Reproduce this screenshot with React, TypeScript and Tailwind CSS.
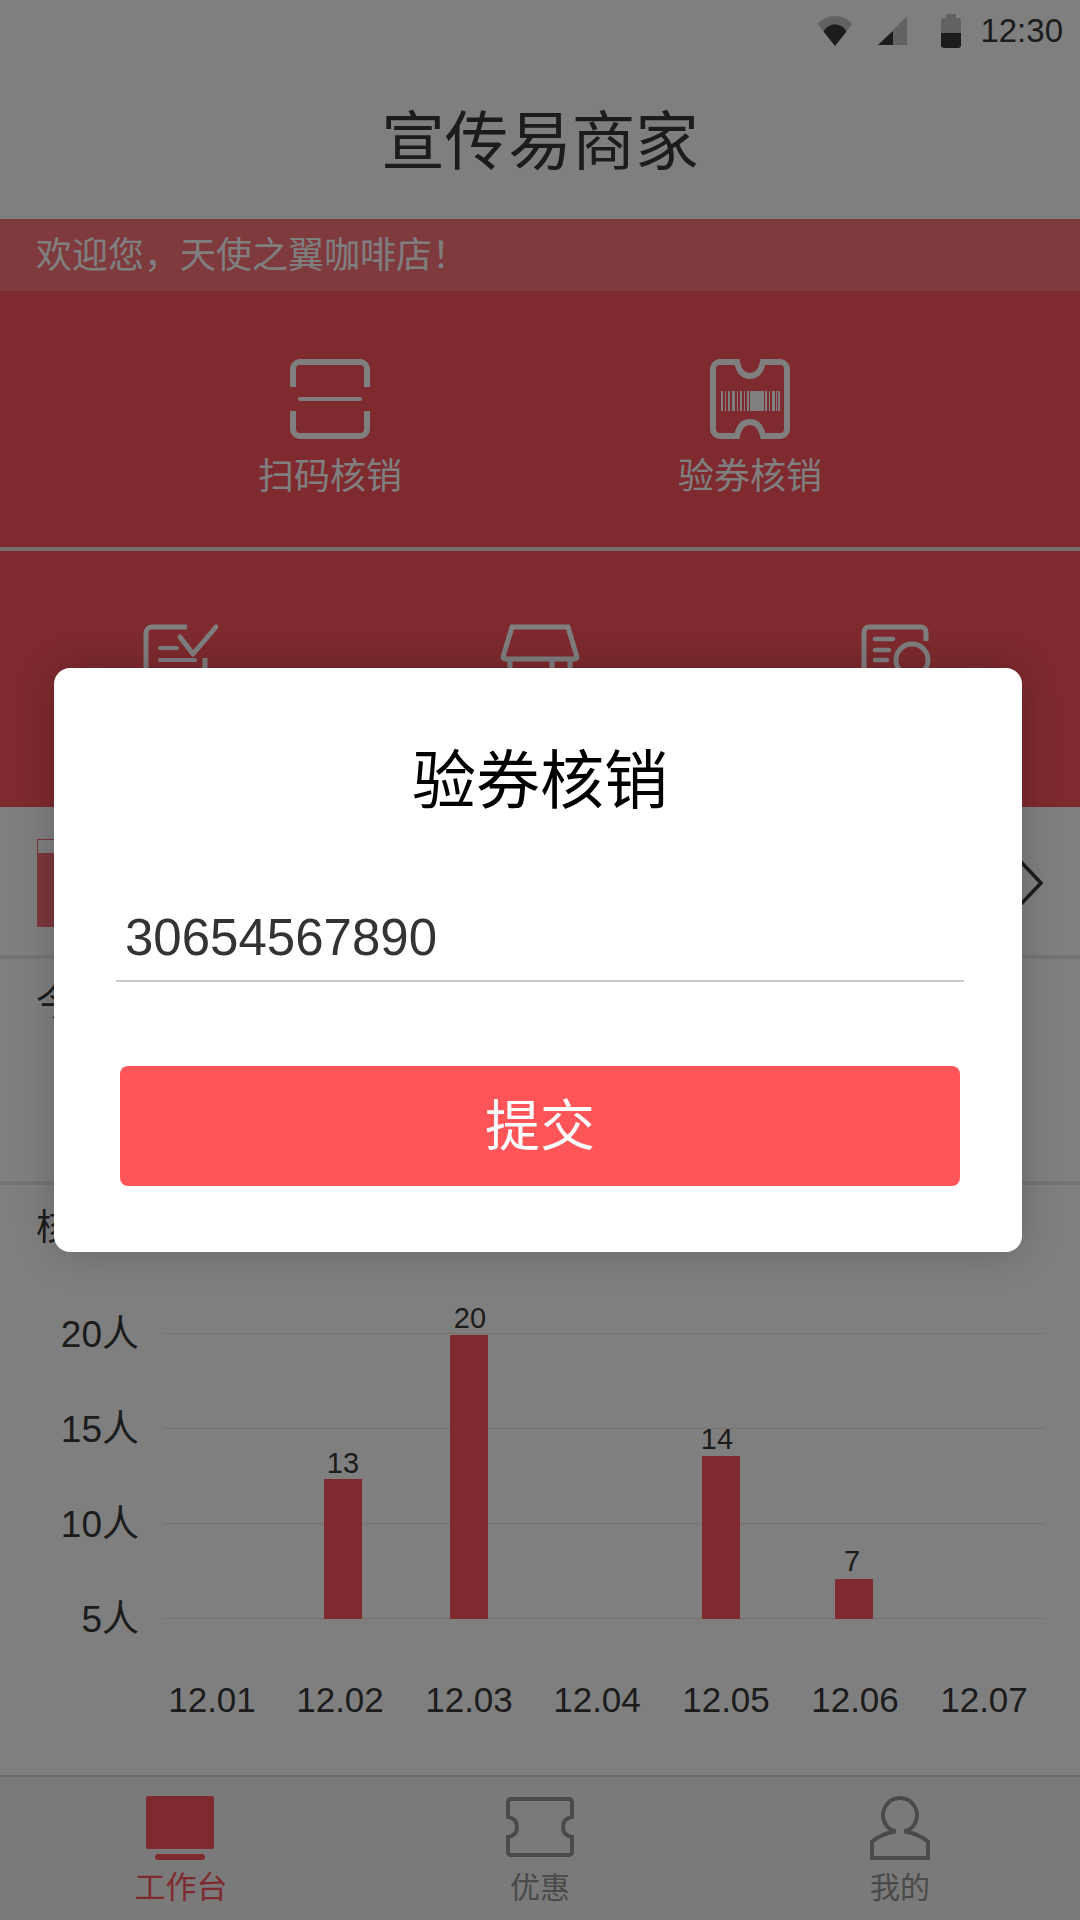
const CJK = "font-['Liberation_Sans','Noto_Sans_CJK_SC',sans-serif]";

function ScanIcon() {
  return (
    <svg width="80" height="80" viewBox="0 0 80 80" fill="none" stroke="white" strokeWidth="6">
      <path d="M3 28V10a7 7 0 0 1 7-7h60a7 7 0 0 1 7 7v18" />
      <path d="M3 52v18a7 7 0 0 0 7 7h60a7 7 0 0 0 7-7V52" />
      <path d="M10 40h60" strokeWidth="4" strokeLinecap="round" />
    </svg>
  );
}

function CouponIcon() {
  const bars = [
    [0, 2], [4, 1], [7, 2], [11, 3], [16, 1], [19, 2], [23, 1], [26, 2],
    [29, 14], [44, 2], [48, 1], [51, 3], [55, 1], [57, 2],
  ];
  return (
    <svg width="80" height="80" viewBox="0 0 80 80" fill="none" stroke="white" strokeWidth="6">
      <path d="M27 3H10a7 7 0 0 0-7 7v60a7 7 0 0 0 7 7h17c2-10 7-14 13-14s11 4 13 14h17a7 7 0 0 0 7-7V10a7 7 0 0 0-7-7H53c-2 10-7 14-13 14S29 13 27 3Z" />
      <g fill="white" stroke="none">
        {bars.map(([x, w], i) => (
          <rect key={i} x={11 + x} y="32" width={w} height="20" />
        ))}
      </g>
    </svg>
  );
}

function ChecklistIcon() {
  return (
    <svg width="75" height="80" viewBox="0 0 75 80" fill="none" stroke="white" strokeWidth="5">
      <path d="M44 3H9a6 6 0 0 0-6 6v64a4 4 0 0 0 4 4h52a4 4 0 0 0 3-4V34" />
      <path d="M37 13l13 17 23-27" strokeWidth="5" strokeLinecap="round" strokeLinejoin="round" />
      <path d="M17 24h17M17 36h35" strokeLinecap="round" strokeWidth="4" />
    </svg>
  );
}

function StoreIcon() {
  return (
    <svg width="80" height="80" viewBox="0 0 80 80" fill="none" stroke="white" strokeWidth="5">
      <path d="M12 3h56l9 30a2 2 0 0 1-2 2H5a2 2 0 0 1-2-2L12 3Z" />
      <path d="M10 35v41h60V35M52 37v39" />
    </svg>
  );
}

function SearchDocIcon() {
  return (
    <svg width="72" height="80" viewBox="0 0 72 80" fill="none" stroke="white" strokeWidth="5">
      <path d="M3 72V8a5 5 0 0 1 5-5h52a5 5 0 0 1 5 5v9" strokeWidth="5" />
      <path d="M14 15h18M14 26h14M14 36h12" strokeLinecap="round" strokeWidth="4.5" />
      <circle cx="51" cy="36" r="16" strokeWidth="5" />
    </svg>
  );
}

function StatusIcons() {
  return (
    <div className="flex items-center">
      <svg width="34" height="30" viewBox="0 0 34 30" className="mt-[1px]">
        <path d="M0 8C4 3 10 0 17 0s13 3 17 8L17 30Z" fill="#c4c4c4" />
        <path d="M5.500 15.500C8.500 10.500 12.500 8.500 17 8.500s8.500 2 11.500 7L17 30Z" fill="#383838" />
      </svg>
      <svg width="29" height="29" viewBox="0 0 29 29" className="ml-[26px]">
        <path d="M29 0V29H0Z" fill="#c4c4c4" />
        <path d="M15 15V29H0Z" fill="#383838" />
      </svg>
      <svg width="20" height="34" viewBox="0 0 20 34" className="ml-[34px] mt-[2px]">
        <path d="M6 0h8a1 1 0 0 1 1 1v3h3a2 2 0 0 1 2 2v13H0V6a2 2 0 0 1 2-2h3V1a1 1 0 0 1 1-1Z" fill="#c4c4c4" />
        <path d="M0 19h20v12a3 3 0 0 1-3 3H3a3 3 0 0 1-3-3Z" fill="#383838" />
      </svg>
    </div>
  );
}

function Chart() {
  const grid = [1333, 1428, 1523, 1618];
  const bars = [
    { x: 324, y: 1479, label: "13", lx: 343, ly: 1473 },
    { x: 450, y: 1335, label: "20", lx: 470, ly: 1328 },
    { x: 702, y: 1456, label: "14", lx: 717, ly: 1449 },
    { x: 835, y: 1579, label: "7", lx: 852, ly: 1571 },
  ];
  const yLabels = ["20", "15", "10", "5"];
  const xLabels = [
    ["12.01", 212],
    ["12.02", 340],
    ["12.03", 469],
    ["12.04", 597],
    ["12.05", 726],
    ["12.06", 855],
    ["12.07", 984],
  ] as const;
  const top = 1290;
  const font = "Liberation Sans, Noto Sans CJK SC, sans-serif";
  return (
    <svg width="1080" height="450" viewBox={`0 ${top} 1080 450`} className="block" fontFamily={font} fill="#383838">
      {grid.map((y) => (
        <line key={y} x1="164" x2="1044" y1={y + 0.5} y2={y + 0.5} stroke="#fbdfe1" strokeWidth="1" />
      ))}
      {bars.map((b) => (
        <g key={b.label}>
          <rect x={b.x} y={b.y} width="38" height={1619 - b.y} fill="#fc545c" />
          <text x={b.lx} y={b.ly} fontSize="29" textAnchor="middle">{b.label}</text>
        </g>
      ))}
      {yLabels.map((t, i) => (
        <text key={t} x="139" y={grid[i] + 14} fontSize="37" textAnchor="end">{t}人</text>
      ))}
      {xLabels.map(([t, x]) => (
        <text key={t} x={x} y="1712" fontSize="35" textAnchor="middle">{t}</text>
      ))}
    </svg>
  );
}

export default function App() {
  return (
    <div className={`relative flex h-[1920px] w-[1080px] flex-col overflow-hidden bg-white ${CJK}`}>
      {/* status bar */}
      <div className="flex h-[60px] items-center justify-end pr-[17px] text-[#383838]">
        <StatusIcons />
        <span className="ml-[19px] text-[33px] leading-none">12:30</span>
      </div>
      {/* title */}
      <div className="flex h-[159px] items-center justify-center pt-[6px] text-[63.5px] leading-none text-[#383838]">宣传易商家</div>
      {/* welcome */}
      <div className="flex h-[72px] items-center bg-[#ff747c] pl-[36px] pt-[2px] text-[36px] leading-none text-white">欢迎您，天使之翼咖啡店！</div>
      {/* red panel */}
      <div className="flex h-[516px] flex-col bg-[#fc545c] text-white">
        <div className="flex h-[256px] px-[120px] pt-[68px]">
          <div className="flex flex-1 flex-col items-center">
            <ScanIcon />
            <span className="mt-[18px] text-[36px] leading-[40px]">扫码核销</span>
          </div>
          <div className="flex flex-1 flex-col items-center">
            <CouponIcon />
            <span className="mt-[18px] text-[36px] leading-[40px]">验券核销</span>
          </div>
        </div>
        <div className="h-[4px] bg-[#e8e0e0]" />
        <div className="grid grid-cols-3 pt-[73px]">
          <div className="flex justify-center pl-[1px]"><ChecklistIcon /></div>
          <div className="flex justify-center"><StoreIcon /></div>
          <div className="flex justify-center pr-[7px]"><SearchDocIcon /></div>
        </div>
      </div>
      {/* notice row */}
      <div className="flex h-[152px] items-center justify-between border-b-[4px] border-[#ebebeb] pl-[37px] pr-[37px] pt-[4px]">
        <div className="flex h-[88px] w-[60px] flex-col border border-[#f67078]">
          <div className="h-[13px] bg-white" />
          <div className="flex-1 bg-[#f67078]" />
        </div>
        <svg width="24" height="46" viewBox="0 0 24 46" fill="none" stroke="#383838" strokeWidth="3.5">
          <path d="M2 2l20 21L2 44" />
        </svg>
      </div>
      {/* today */}
      <div className="h-[226px] border-b-[4px] border-[#ebebeb] pl-[36px] pt-[23px] text-[36px] leading-[44px] text-[#383838]">今日核销</div>
      {/* chart section */}
      <div className="pl-[36px] pt-[21px] text-[36px] leading-[44px] text-[#383838]">核销统计</div>
      <div className="absolute left-0 top-[1290px]">
        <Chart />
      </div>
      {/* tab bar */}
      <div className="absolute inset-x-0 bottom-0 grid h-[145px] grid-cols-3 border-t-2 border-[#d8d8d8] bg-[#f5f5f5]">
        <div className="flex flex-col items-center pt-[19px] text-[#fc545c]">
          <div className="h-[53px] w-[68px] rounded-[2px] bg-[#fc545c]" />
          <div className="mt-[5px] h-[6px] w-[50px] rounded-full bg-[#fc545c]" />
          <span className="ml-[2px] mt-[11px] text-[31px] leading-[34px]">工作台</span>
        </div>
        <div className="flex flex-col items-center pt-[20px] text-[#949494]">
          <svg width="68" height="60" viewBox="0 0 68 60" fill="none" stroke="#949494" strokeWidth="4">
            <path d="M5 2h58a3 3 0 0 1 3 3v15c-6 1-9 5-9 10s3 9 9 10v15a3 3 0 0 1-3 3H5a3 3 0 0 1-3-3V40c6-1 9-5 9-10s-3-9-9-10V5a3 3 0 0 1 3-3Z" />
          </svg>
          <span className="mt-[14px] text-[30px] leading-[34px]">优惠</span>
        </div>
        <div className="flex flex-col items-center pt-[19px] text-[#949494]">
          <svg width="60" height="64" viewBox="0 0 60 64" fill="none" stroke="#949494" strokeWidth="4">
            <path d="M25.500 35.500A17 17 0 1 1 34.500 35.500C45 37 52 40 58 46V62H2V46C8 40 15 37 25.500 35.500Z" />
          </svg>
          <span className="mt-[11px] text-[30px] leading-[34px]">我的</span>
        </div>
      </div>
      {/* dim + dialog */}
      <div className="absolute inset-0 flex items-center justify-center bg-black/50">
        <div className="mr-[4px] flex h-[584px] w-[968px] flex-col rounded-[16px] bg-white pl-[62px] pr-[58px] pt-[75px] shadow-[0_0_40px_rgba(0,0,0,0.2)]">
          <div className="text-center text-[64px] leading-[76px] text-black">验券核销</div>
          <div className="mt-[82px] border-b-2 border-[#c8c8c8] pb-[5px] pl-[9px] text-[51px] leading-[74px] text-[#333333]">30654567890</div>
          <div className="mx-[4px] mt-[84px] flex h-[120px] items-center justify-center rounded-[8px] bg-[#ff5558] text-[55px] leading-none text-white">提交</div>
        </div>
      </div>
    </div>
  );
}
